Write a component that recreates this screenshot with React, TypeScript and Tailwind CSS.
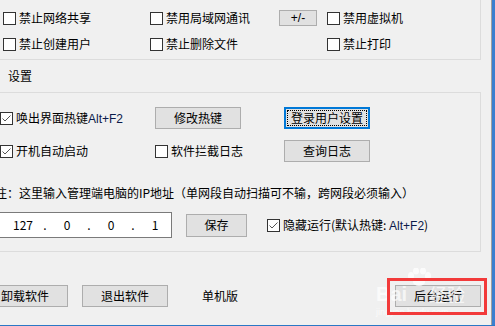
import React from "react";

function Box({ checked }: { checked?: boolean }) {
  return (
    <span className="w-[13px] h-[13px] border border-[#333333] bg-white flex items-center justify-center shrink-0">
      {checked && (
        <svg width="11" height="11" viewBox="0 0 11 11">
          <path d="M1.5 5.5 L4 8 L9.5 2.5" stroke="#555555" fill="none" strokeWidth="1" />
        </svg>
      )}
    </span>
  );
}

function Check({ label, checked, className = "" }: { label: React.ReactNode; checked?: boolean; className?: string }) {
  return (
    <label className={`flex items-center gap-[3px] whitespace-nowrap ${className}`}>
      <Box checked={checked} />
      <span>{label}</span>
    </label>
  );
}

function Btn({ children, className = "" }: { children: React.ReactNode; className?: string }) {
  return (
    <button className={`flex items-center justify-center bg-[#e1e1e1] border border-[#adadad] shrink-0 ${className}`}>
      {children}
    </button>
  );
}

export default function App() {
  const ip = ["127", ".", "0", ".", "0", ".", "1"];

  return (
    <div className="w-[495px] h-[326px] overflow-hidden relative bg-[#f0f0f0] text-black text-[12px] leading-[16px] font-['Microsoft_YaHei','Noto_Sans_CJK_SC',sans-serif] flex flex-col">
      <div className="flex flex-1 min-h-0">
        <div className="w-[491px] flex flex-col">
          {/* top group */}
          <div className="-ml-[10px] -mt-[6px] w-[491px] h-[66px] border border-[#dcdcdc] pl-[12px] pt-[13px] flex flex-col gap-[6px] shrink-0">
            <div className="flex items-center h-[20px]">
              <Check className="w-[147px]" label="禁止网络共享" />
              <Check className="w-[129px]" label="禁用局域网通讯" />
              <Btn className="w-[38px] h-[16px] font-['Liberation_Sans',sans-serif] text-[12px]">+/-</Btn>
              <Check className="ml-[10px]" label="禁用虚拟机" />
            </div>
            <div className="flex items-center h-[20px]">
              <Check className="w-[147px]" label="禁止创建用户" />
              <Check className="w-[177px]" label="禁止删除文件" />
              <Check label="禁止打印" />
            </div>
          </div>

          <div className="h-[32px] flex items-center pl-[8px] shrink-0">设置</div>

          {/* settings group */}
          <div className="-ml-[10px] w-[491px] h-[160px] border border-[#dcdcdc] pl-[9px] flex flex-col shrink-0">
            <div className="flex items-center h-[22px] mt-[14px]">
              <Check
                className="w-[155px]"
                checked
                label={
                  <>
                    唤出界面热键<span className="font-['Liberation_Sans',sans-serif] text-[#0a1a4a]">Alt+F2</span>
                  </>
                }
              />
              <Btn className="w-[86px] h-[22px]">修改热键</Btn>
              <button className="ml-[43px] w-[86px] h-[22px] border-2 border-[#0078d7] bg-[#e1e1e1] p-px shrink-0">
                <span className="w-full h-full flex items-center justify-center border border-dotted border-black">
                  登录用户设置
                </span>
              </button>
            </div>
            <div className="flex items-center h-[22px] mt-[11px]">
              <Check className="w-[155px]" checked label="开机自动启动" />
              <Check className="w-[129px]" label="软件拦截日志" />
              <Btn className="w-[86px] h-[22px]">查询日志</Btn>
            </div>
            <div className="mt-[23px] h-[16px] -ml-[5px] whitespace-nowrap">
              注：这里输入管理端电脑的IP地址（单网段自动扫描可不输，跨网段必须输入）
            </div>
            <div className="flex items-center h-[26px] mt-[11px]">
              <div className="-ml-[5px] w-[177px] h-[26px] border border-[#7a7a7a] bg-white flex items-center pl-[16px] shrink-0">
                {ip.map((s, i) => (
                  <span key={i} className="w-[22px] text-center">
                    {s}
                  </span>
                ))}
              </div>
              <Btn className="ml-[14px] w-[61px] h-[23px]">保存</Btn>
              <Check
                className="ml-[20px]"
                checked
                label={
                  <>
                    隐藏运行(默认热键: <span className="font-['Liberation_Sans',sans-serif] text-[#0a1a4a]">Alt+F2</span>)
                  </>
                }
              />
            </div>
          </div>

          {/* bottom buttons */}
          <div className="flex items-center mt-[33px]">
            <Btn className="-ml-[18px] w-[86px] h-[22px]">卸载软件</Btn>
            <Btn className="ml-[14px] w-[86px] h-[22px]">退出软件</Btn>
            <span className="ml-[34px]">单机版</span>
            <Btn className="ml-auto mr-[10px] w-[86px] h-[22px]">后台运行</Btn>
          </div>
        </div>
        <div className="w-px bg-[#a0a0a0]" />
        <div className="w-[3px] bg-[#3b7fcf]" />
      </div>
      <div className="h-px bg-[#2b78c5] shrink-0" />

      {/* watermark */}
      <div className="absolute left-[376px] top-[268px] pointer-events-none text-white/70 flex flex-col">
        <div className="flex items-end gap-[2px] pl-[30px]">
          <svg width="26" height="18" viewBox="0 0 26 18">
            <g fill="rgba(255,255,255,0.75)">
              <ellipse cx="5" cy="8" rx="3" ry="4" />
              <ellipse cx="10" cy="3" rx="3" ry="3.5" />
              <ellipse cx="17" cy="3" rx="3" ry="3.5" />
              <ellipse cx="22" cy="8" rx="3" ry="4" />
              <ellipse cx="13" cy="14" rx="6" ry="4" />
            </g>
          </svg>
        </div>
        <div className="flex items-center -mt-[2px]">
          <span className="font-['Liberation_Sans',sans-serif] font-bold text-[20px] leading-[20px]">Bai</span>
          <span className="ml-[22px] text-[18px] leading-[20px]">经验</span>
        </div>
        <span className="font-['Liberation_Sans',sans-serif] text-[9px] leading-[10px] mt-[3px]">jingyan.baidu.com</span>
      </div>

      {/* highlight */}
      <div className="absolute left-[387px] top-[278px] w-[100px] h-[37px] border-[3px] border-[#f23a3a] pointer-events-none" />
    </div>
  );
}
